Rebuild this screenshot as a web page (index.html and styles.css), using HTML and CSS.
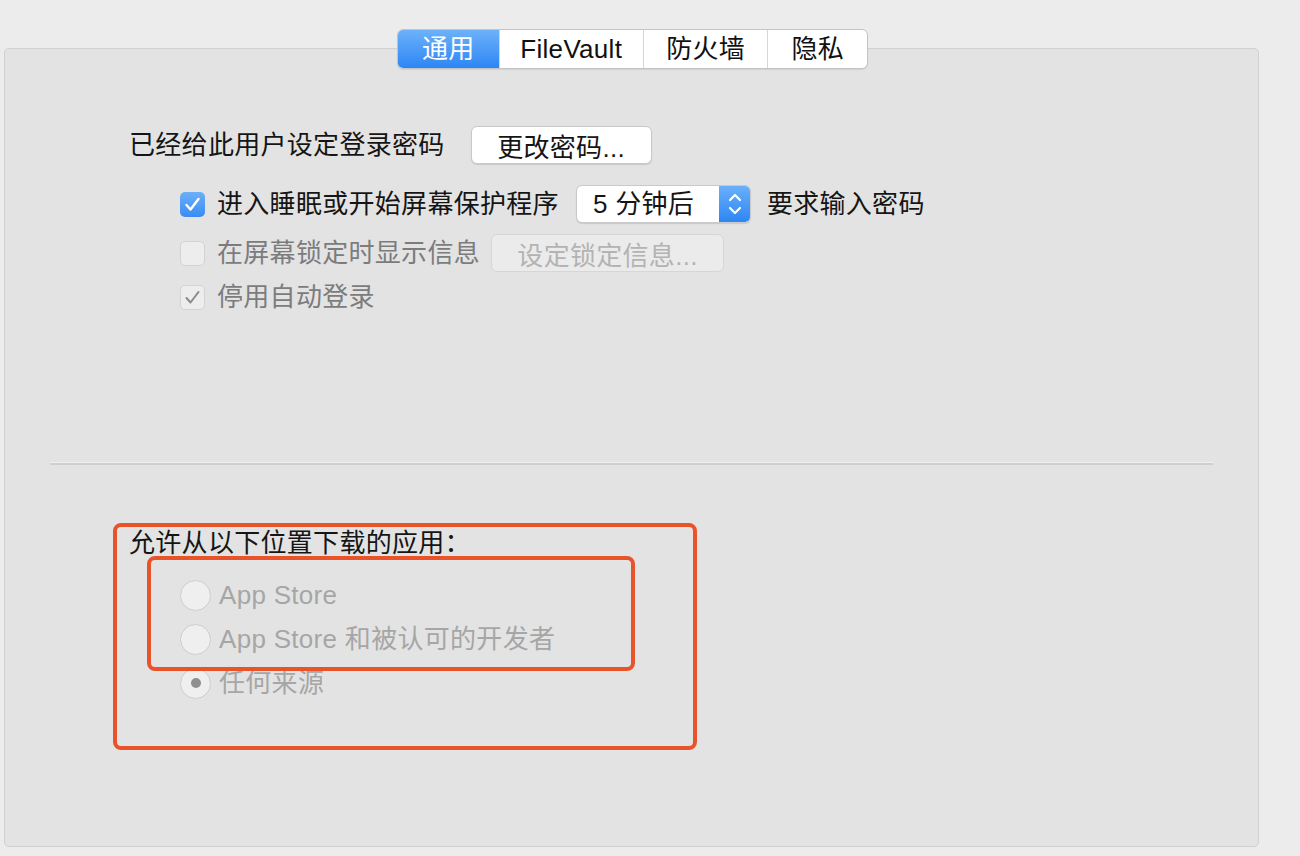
FILE: index.html
```html
<!DOCTYPE html>
<html lang="zh-CN">
<head>
<meta charset="utf-8">
<title>安全性与隐私</title>
<link rel="stylesheet" href="styles.css">
</head>
<body>
<div class="window">
  <div class="tabs">
    <div class="tab active">通用</div>
    <div class="tab">FileVault</div>
    <div class="tab">防火墙</div>
    <div class="tab">隐私</div>
  </div>
  <div class="panel">
    <div class="general">
      <div class="row r1">
        <span class="label">已经给此用户设定登录密码</span>
        <button class="btn change">更改密码...</button>
      </div>
      <div class="row r2 indent">
        <span class="cb checked"><svg viewBox="0 0 25 25" width="25" height="25"><path d="M6.5 13 L10.5 17.5 L18.5 7" fill="none" stroke="#fff" stroke-width="2.4" stroke-linecap="round" stroke-linejoin="round"/></svg></span>
        <span class="label">进入睡眠或开始屏幕保护程序</span>
        <span class="popup">
          <span class="popup-text">5 分钟后</span>
          <span class="stepper"><svg viewBox="0 0 32 38" width="32" height="38"><path d="M11 15 L16 10 L21 15" fill="none" stroke="#fff" stroke-width="2.2" stroke-linecap="round" stroke-linejoin="round"/><path d="M11 23 L16 28 L21 23" fill="none" stroke="#fff" stroke-width="2.2" stroke-linecap="round" stroke-linejoin="round"/></svg></span>
        </span>
        <span class="label after">要求输入密码</span>
      </div>
      <div class="row r3 indent">
        <span class="cb disabled"></span>
        <span class="label dim">在屏幕锁定时显示信息</span>
        <button class="btn lockmsg" disabled>设定锁定信息...</button>
      </div>
      <div class="row r4 indent">
        <span class="cb disabled"><svg viewBox="0 0 25 25" width="25" height="25"><path d="M6.5 13 L10.5 17.5 L18.5 7" fill="none" stroke="#8a8a8a" stroke-width="2" stroke-linecap="round" stroke-linejoin="round"/></svg></span>
        <span class="label dim">停用自动登录</span>
      </div>
    </div>
    <div class="sep"></div>
    <div class="download">
      <div class="heading">允许从以下位置下载的应用：</div>
      <div class="radio-row first"><span class="radio"></span><span class="rlabel">App Store</span></div>
      <div class="radio-row"><span class="radio"></span><span class="rlabel">App Store 和被认可的开发者</span></div>
      <div class="radio-row"><span class="radio on"><span class="dot"></span></span><span class="rlabel">任何来源</span></div>
      <div class="mark outer"></div>
      <div class="mark inner"></div>
    </div>
  </div>
</div>
</body>
</html>
```

FILE: styles.css
```css
* { box-sizing: border-box; }
html, body { margin: 0; padding: 0; }
body {
  background: #ececec;
  width: 1300px;
  height: 856px;
  overflow: hidden;
  font-family: "Liberation Sans", "Noto Sans CJK SC", sans-serif;
  font-size: 26px;
  letter-spacing: 0.3px;
  color: #151515;
}
.window {
  margin-left: 4px;
  width: 1255px;
  padding-top: 29px;
}
.tabs {
  position: relative;
  z-index: 1;
  display: flex;
  width: 471px;
  height: 40px;
  margin: 0 auto -21px auto;
  transform: translateX(1px);
  background: #fff;
  border: 1px solid #c4c4c4;
  border-radius: 6px;
  box-shadow: 0 1px 1px rgba(0,0,0,0.08);
  overflow: hidden;
}
.tab {
  display: flex;
  align-items: center;
  justify-content: center;
  height: 100%;
  line-height: 38px;
  border-left: 1px solid #d6d6d6;
  color: #111;
}
.tab:nth-child(1) { width: 101px; border-left: none; }
.tab:nth-child(2) { width: 145px; }
.tab:nth-child(3) { width: 125px; }
.tab:nth-child(4) { width: 100px; }
.tab.active {
  background: linear-gradient(#6db1fa, #2d86f5);
  color: #fff;
}
.panel {
  height: 799px;
  background: #e3e3e3;
  border: 1px solid #d0d0d0;
  border-radius: 5px;
  padding-top: 77px;
}
.general { padding-left: 124px; }
.row {
  display: flex;
  align-items: center;
  height: 38px;
  white-space: nowrap;
}
.row .label { line-height: 38px; }
.r2 { margin-top: 21px; }
.r3 { margin-top: 11px; }
.r4 { margin-top: 6px; }
.indent { padding-left: 51px; }
.btn {
  font: inherit;
  letter-spacing: inherit;
  height: 38px;
  padding: 0;
  background: #fff;
  color: #151515;
  border: 1px solid #c8c8c8;
  border-radius: 6px;
  box-shadow: 0 1px 1px rgba(0,0,0,0.12);
}
.change { margin-left: 26px; width: 181px; }
.lockmsg {
  margin-left: 11px;
  width: 233px;
  background: #ebebeb;
  color: #b3b3b3;
  border-color: #d6d6d6;
  box-shadow: none;
}
.cb {
  width: 25px;
  height: 25px;
  border-radius: 5px;
  margin-right: 12px;
  flex: none;
  display: flex;
}
.cb.checked {
  background: linear-gradient(#6bb0f9, #3a8bf5);
  border: none;
}
.cb.disabled {
  background: #ededed;
  border: 1px solid #d3d3d3;
}
.cb.disabled svg { margin: -1px; }
.dim { color: #7c7c7c; }
.popup {
  display: flex;
  margin-left: 17px;
  width: 175px;
  height: 38px;
  background: #fff;
  border: 1px solid #c9c9c9;
  border-radius: 6px;
  box-shadow: 0 1px 1px rgba(0,0,0,0.12);
  overflow: hidden;
}
.popup-text {
  flex: 1;
  padding-left: 16px;
  line-height: 36px;
}
.stepper {
  width: 32px;
  background: linear-gradient(#6cb1fa, #2b84f5);
  display: flex;
  align-items: center;
  justify-content: center;
  margin: -1px -1px -1px 0;
}
.after { margin-left: 16px; }
.sep {
  margin: 146px 45px 0 45px;
  height: 3px;
  border-top: 1px solid #f0f0f0;
  border-bottom: 2px solid #cfcfcf;
}
.download {
  position: relative;
  margin-top: 59px;
  padding-left: 124px;
}
.heading { line-height: 38px; height: 38px; }
.radio-row {
  display: flex;
  align-items: center;
  height: 44px;
  padding-left: 51px;
  color: #a6a6a6;
}
.radio-row.first { margin-top: 11px; }
.radio {
  width: 31px;
  height: 31px;
  border-radius: 50%;
  background: #efefef;
  border: 1px solid #cdcdcd;
  margin-right: 8px;
  display: flex;
  align-items: center;
  justify-content: center;
  flex: none;
}
.dot {
  width: 10px;
  height: 10px;
  border-radius: 50%;
  background: #8f8f8f;
}
.rlabel { line-height: 44px; }
.mark {
  position: absolute;
  border: 4px solid #e8532a;
  border-radius: 8px;
}
.mark.outer { left: 108px; top: -1px; width: 584px; height: 227px; }
.mark.inner { left: 142px; top: 32px; width: 488px; height: 115px; }
```
